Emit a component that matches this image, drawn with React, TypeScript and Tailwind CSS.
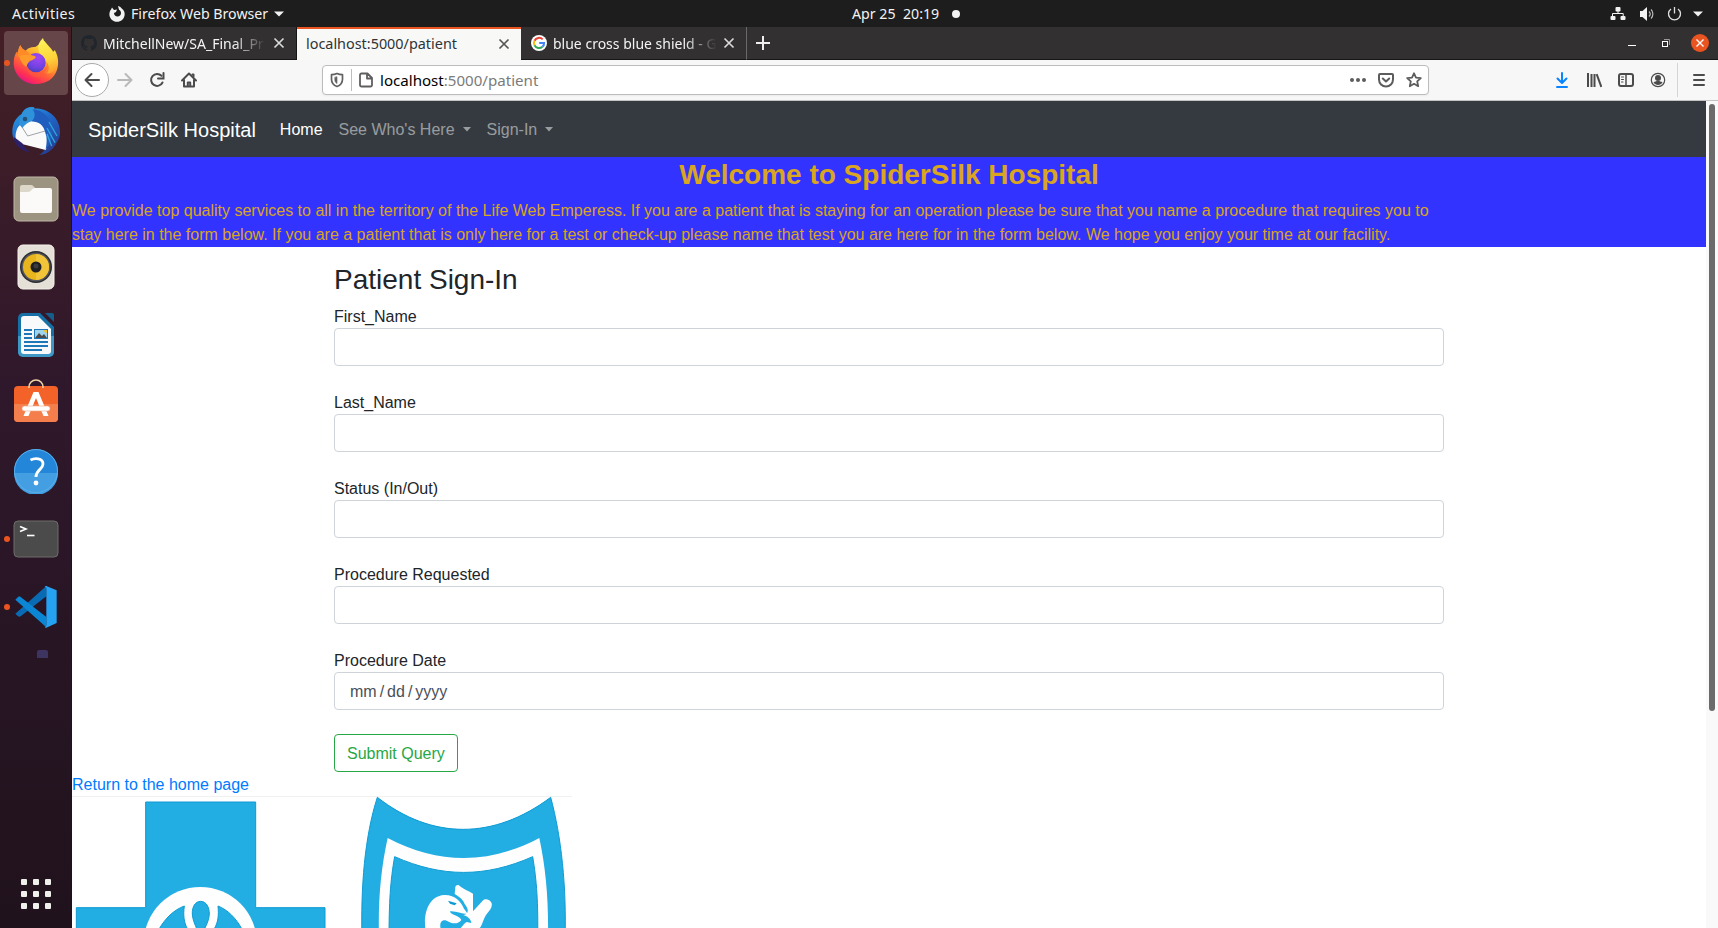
import React from "react";

function FirefoxLogo() {
  return (
    <svg width="48" height="50" viewBox="0 0 144 150">
      <defs>
        <linearGradient id="ffBody" x1="0.85" y1="0.05" x2="0.3" y2="1">
          <stop offset="0" stopColor="#fff24a" />
          <stop offset="0.35" stopColor="#ffb52c" />
          <stop offset="0.62" stopColor="#ff6a35" />
          <stop offset="0.85" stopColor="#ff2f55" />
          <stop offset="1" stopColor="#e31587" />
        </linearGradient>
        <linearGradient id="ffTail" x1="0.4" y1="0" x2="0.6" y2="1">
          <stop offset="0" stopColor="#fff45a" />
          <stop offset="0.6" stopColor="#ffd43a" />
          <stop offset="1" stopColor="#ff9a2d" />
        </linearGradient>
        <radialGradient id="ffGlobe" cx="0.6" cy="0.25" r="0.8">
          <stop offset="0" stopColor="#a347f0" />
          <stop offset="0.6" stopColor="#7542e5" />
          <stop offset="1" stopColor="#4a3fb8" />
        </radialGradient>
      </defs>
      <path d="M25 28 C28 36 34 42 41 44 C48 36 58 32 70 33 L96 14 C104 24 118 36 124 48 L128 42 C138 58 141 78 136 98 C128 128 102 144 72 144 C36 144 5 118 5 80 C5 64 10 52 16 46 L18 55 C18 44 20 35 25 28Z" fill="url(#ffBody)" />
      <path d="M93 6 C96 22 116 34 123 52 L126 44 C136 58 138 78 132 96 C124 112 108 116 96 110 C108 100 106 78 94 66 C76 52 72 24 93 6Z" fill="url(#ffTail)" />
      <circle cx="72" cy="80" r="29" fill="url(#ffGlobe)" />
      <path d="M20 50 C32 54 38 50 48 54 C55 58 64 58 72 62 C70 68 62 72 55 74 C50 78 46 82 43 92 C34 88 22 72 20 50Z" fill="#ff9b2a" />
      <path d="M25 28 C28 36 34 42 41 44 C46 46 54 52 52 58 C40 54 26 58 18 62 C17 48 20 36 25 28Z" fill="#ff8a28" />
      <path d="M43 90 C52 110 74 116 92 104 C104 96 106 86 102 76 C118 94 110 120 84 124 C60 126 44 112 43 90Z" fill="#ff5a38" opacity="0.6" />
    </svg>
  );
}

function ThunderbirdLogo() {
  return (
    <svg width="50" height="50" viewBox="0 0 150 150">
      <defs>
        <linearGradient id="tb" x1="0.1" y1="0" x2="0.8" y2="1">
          <stop offset="0" stopColor="#2aa2e2" />
          <stop offset="0.45" stopColor="#2068ca" />
          <stop offset="1" stopColor="#273a8c" />
        </linearGradient>
      </defs>
      <path d="M4 78 C4 50 16 34 32 24 C38 8 54 0 70 4 L66 8 C112 4 146 36 147 76 C148 92 142 104 138 108 C130 126 112 146 84 147 C96 140 102 132 104 126 L20 112 C8 104 4 90 4 78Z" fill="url(#tb)" />
      <path d="M22 62 C14 74 10 94 18 110 L104 132 C112 116 114 98 106 74 C96 56 84 46 64 46 C48 46 34 50 22 62Z" fill="#fafafa" />
      <path d="M26 52 L50 90 L106 74" fill="none" stroke="#8d9096" strokeWidth="2.5" />
      <path d="M32 24 C42 4 62 2 72 6 C66 10 64 12 64 14 C74 22 72 36 64 44 C52 48 42 54 34 66 L24 54 C26 44 28 36 32 24Z" fill="#3192dc" />
      <path d="M66 10 C98 14 120 36 124 70 C126 98 116 120 104 130 C108 110 108 94 104 84 C98 56 84 48 62 46 C74 36 74 22 66 10Z" fill="#1f5dbe" />
      <path d="M114 48 L138 90 M108 66 L132 110 M108 84 L122 120" stroke="#2fa6dc" strokeWidth="4" />
      <circle cx="42" cy="39" r="7" fill="#24527a" />
      <path d="M8 92 C8 114 26 132 58 140 C44 128 38 118 34 112Z" fill="#2d2068" />
    </svg>
  );
}

function FilesLogo() {
  return (
    <svg width="46" height="46" viewBox="0 0 46 46">
      <rect x="1" y="1" width="44" height="44" rx="5" fill="#9c9381" stroke="#c0b9a8" />
      <path d="M7 11a2 2 0 0 1 2-2h9c2 0 3 2 4 3v6H7z" fill="#ddd7ca" />
      <path d="M7 16h8c3 0 4-4 7-4h15a2 2 0 0 1 2 2v21a2 2 0 0 1-2 2H9a2 2 0 0 1-2-2z" fill="#fbfaf8" />
    </svg>
  );
}

function RhythmboxLogo() {
  return (
    <svg width="38" height="46" viewBox="0 0 38 46">
      <rect x="1" y="1" width="36" height="44" rx="5" fill="#e4dfd7" stroke="#f5f2ec" />
      <circle cx="19" cy="23" r="16" fill="#2c2d31" />
      <circle cx="19" cy="23" r="14.5" fill="#55575d" />
      <circle cx="19" cy="23" r="13" fill="#e9b51c" />
      <path d="M19 10a13 13 0 0 1 0 26z" fill="#f2c43a" />
      <circle cx="19" cy="23" r="5.5" fill="#1f1f21" />
      <circle cx="19" cy="22" r="2.5" fill="#3c3c3f" />
    </svg>
  );
}

function WriterLogo() {
  return (
    <svg width="38" height="46" viewBox="0 0 38 46">
      <path d="M6 1h17l14 14v25a5 5 0 0 1-5 5H6a5 5 0 0 1-5-5V6a5 5 0 0 1 5-5z" fill="#1670a5" />
      <path d="M1 24h36v16a5 5 0 0 1-5 5H6a5 5 0 0 1-5-5z" fill="#3f97c6" />
      <path d="M28 1h7a2 2 0 0 1 2 2v7z" fill="#155d8a" />
      <path d="M7 4h14l13 13v22a3 3 0 0 1-3 3H7a3 3 0 0 1-3-3V7a3 3 0 0 1 3-3z" fill="#f8f9fa" />
      <path d="M7 18h8M7 22h8M7 26h8M7 30h24M7 34h24M7 38h18" stroke="#1e78b8" strokeWidth="2" />
      <rect x="17.5" y="17.5" width="13" height="9" fill="#9fd4ef" stroke="#1e78b8" />
      <path d="M18 26l4-5 3 3 2-2 3 4z" fill="#4a4a4a" />
      <path d="M27 18h3v3c-2 0-3-1-3-3z" fill="#f5c02c" />
    </svg>
  );
}

function SoftwareLogo() {
  return (
    <svg width="46" height="44" viewBox="0 0 46 44">
      <rect x="1" y="7" width="44" height="36" rx="4" fill="#f26229" />
      <path d="M1 25h44v14a4 4 0 0 1-4 4H5a4 4 0 0 1-4-4z" fill="#f47f4c" />
      <path d="M16 9V8a7 7 0 0 1 14 0v1" fill="none" stroke="#f2d3a2" strokeWidth="1.6" />
      <path d="M20.500 13h5l10 24h-5L23 19l-7.500 18h-5z" fill="#fff" />
      <rect x="9" y="27" width="28" height="5" rx="2.500" fill="#fff" stroke="#f0a684" strokeWidth="0.6" />
    </svg>
  );
}

function HelpLogo() {
  return (
    <svg width="46" height="46" viewBox="0 0 46 46">
      <circle cx="23" cy="23" r="22" fill="#2486d8" />
      <path d="M1 25a22 22 0 0 0 44 0z" fill="#439ee2" />
      <circle cx="23" cy="23" r="21.500" fill="none" stroke="#5aaeea" />
      <path d="M17.500 12c4-2 12.500-2.500 12.500 4 0 5.500-7 5.500-7 13" fill="none" stroke="#fff" strokeWidth="2.800" />
      <circle cx="23" cy="35" r="2.400" fill="#fff" />
    </svg>
  );
}

function TerminalLogo() {
  return (
    <svg width="46" height="38" viewBox="0 0 46 38">
      <rect x="1" y="1" width="44" height="36" rx="4" fill="#4b4b4b" stroke="#6c6c69" />
      <path d="M7 6.500l6 2.500-6 2.500" fill="none" stroke="#fff" strokeWidth="1.600" />
      <path d="M14 15.500h7.500" stroke="#fff" strokeWidth="1.600" />
    </svg>
  );
}

function CodeLogo() {
  return (
    <svg width="44" height="44" viewBox="0 0 132 132">
      <path d="M4 86l8 8c3 2 6 2 8 0L97 34V3z" fill="#0a6bb5" />
      <path d="M4 44l8-8c3-2 6-2 8 0l77 60v31z" fill="#0b86d4" />
      <path d="M97 3l31 13v98l-31 14c-3 1-4 0-5-3 3 0 5-1 5-6V12c0-5-2-6-5-6 1-3 3-4 5-3z" fill="#25a2f2" />
    </svg>
  );
}

function DockItem({ children, running, active }: { children: React.ReactNode; running?: boolean; active?: boolean }) {
  return (
    <li className="relative flex h-[68px] w-[72px] shrink-0 items-center justify-center">
      {active && <span className="absolute inset-x-1 inset-y-0.5 rounded bg-[#67464a]" />}
      {running && <span className="absolute left-1 top-[31px] size-1.5 rounded-full bg-[#e95420]" />}
      <span className="relative">{children}</span>
    </li>
  );
}

function Dock() {
  return (
    <aside className="flex w-[72px] shrink-0 flex-col justify-between border-r border-[#20101b] bg-linear-to-b from-[#441f25] via-[#2f182b] via-40% to-[#20121c] pt-0.5">
      <ul className="flex flex-col">
        <DockItem running active><div className="-mt-1"><FirefoxLogo /></div></DockItem>
        <DockItem><ThunderbirdLogo /></DockItem>
        <DockItem><FilesLogo /></DockItem>
        <DockItem><RhythmboxLogo /></DockItem>
        <DockItem><WriterLogo /></DockItem>
        <DockItem><div className="-mt-1"><SoftwareLogo /></div></DockItem>
        <DockItem><HelpLogo /></DockItem>
        <DockItem running><TerminalLogo /></DockItem>
        <DockItem running><CodeLogo /></DockItem>
        <li className="ml-[37px] mt-[9px] h-2 w-[11px] rounded-t-[2px] bg-[#3d3560]" />
      </ul>
      <div className="mb-[19px] ml-[21px] grid w-[30px] grid-cols-3 gap-1.5">
        {Array.from({ length: 9 }, (_, i) => (
          <span key={i} className="size-1.5 rounded-[1px] bg-[#efefec]" />
        ))}
      </div>
    </aside>
  );
}

function Caret({ className }: { className: string }) {
  return (
    <svg className={className} width="10" height="6" viewBox="0 0 10 6">
      <path d="M0 .5h10L5 5.500z" fill="currentColor" />
    </svg>
  );
}

function SystemBar() {
  return (
    <header className="grid h-[27px] shrink-0 grid-cols-[852px_1fr_auto] items-center bg-[#1d1d1d] text-[14.200px] leading-[26px] text-[#f2f2f2]">
      <div className="flex items-center pl-3">
        <span className="w-[97px] tracking-[0.400px]">Activities</span>
        <svg width="16" height="16" viewBox="0 0 16 16">
          <path d="M3 1.500l2 2.500 3-.5-1 2.500-2 1c0 2 1.500 3.500 3.500 3.500S12 9 12 7c0-1.500-.8-2.500-2-3.200L9 0c2 .5 3 1.500 4 2.800 2 1.500 3 4 2.600 6.400C15 13 12 15.800 8 15.800S.4 12.500.4 8.500c0-2 .6-3.800 1.600-5z" fill="#f2f2f2" />
        </svg>
        <span className="ml-[6px] w-[143px] whitespace-nowrap">Firefox Web Browser</span>
        <Caret className="" />
      </div>
      <div className="flex items-center whitespace-pre">
        <span className="w-[100px]">Apr 25  20:19</span>
        <span className="size-2 rounded-full bg-[#f2f2f2]" />
      </div>
      <div className="flex items-center pr-[15px]">
        <svg className="mr-[13px]" width="16" height="16" viewBox="0 0 16 16" fill="#f2f2f2">
          <rect x="5.500" y="1" width="5" height="4.500" rx="1" /><rect x="0.500" y="10" width="5" height="4" rx="1" /><rect x="10.500" y="10" width="5" height="4" rx="1" />
          <path d="M2.500 10V7.500h10.700V10M8 5v3" fill="none" stroke="#f2f2f2" />
        </svg>
        <svg width="16" height="16" viewBox="0 0 16 16">
          <path d="M1 5h2.500L8 1v14l-4.500-4H1z" fill="#f2f2f2" />
          <path d="M10 5.500c1.500 1.500 1.500 3.500 0 5M12 3.500c2.500 2.500 2.500 6.500 0 9" fill="none" stroke="#b9b9b9" strokeWidth="1.200" />
        </svg>
        <svg className="ml-3" width="15" height="16" viewBox="0 0 15 16">
          <path d="M4 3a6 6 0 1 0 7 0M7.500 1v6.500" fill="none" stroke="#e0e0e0" strokeWidth="1.300" />
        </svg>
        <Caret className="ml-[11px]" />
      </div>
    </header>
  );
}

function Close({ className }: { className: string }) {
  return (
    <svg className={className} width="12" height="12" viewBox="0 0 12 12">
      <path d="M1.500 1.500l9 9M10.500 1.500l-9 9" stroke="currentColor" strokeWidth="1.700" />
    </svg>
  );
}

function TabStrip() {
  return (
    <div className="flex h-[33px] shrink-0 bg-[#323031] text-[14px] text-[#f4f4f4]">
      <div className="flex w-[225px] items-center border-b border-r border-[#161616] pl-[9px]">
        <svg width="16" height="16" viewBox="0 0 16 16" fill="#20262c">
          <path fillRule="evenodd" d="M8 0C3.580 0 0 3.580 0 8c0 3.540 2.290 6.530 5.470 7.590.4.070.55-.17.55-.38V13.700c-2.010.37-2.530-.49-2.690-.94-.09-.23-.48-.94-.82-1.130-.28-.15-.68-.52-.01-.53.63-.01 1.080.58 1.230.82.72 1.210 1.870.87 2.330.66.07-.52.28-.87.51-1.070-1.780-.2-3.640-.89-3.640-3.950 0-.87.31-1.590.82-2.150-.08-.2-.36-1.020.08-2.120 0 0 .67-.21 2.200.82a7.600 7.600 0 0 1 4 0c1.530-1.040 2.200-.82 2.200-.82.44 1.100.16 1.920.08 2.120.51.56.82 1.270.82 2.150 0 3.070-1.870 3.750-3.650 3.950.29.25.54.73.54 1.480v2.200c0 .21.15.46.55.38A8 8 0 0 0 16 8c0-4.420-3.580-8-8-8z" />
        </svg>
        <span className="ml-1.5 w-[163px] overflow-hidden whitespace-nowrap mask-r-from-80% mask-r-to-100%">MitchellNew/SA_Final_Pr</span>
        <Close className="ml-[7px] text-[#d9d9d9]" />
      </div>
      <div className="flex w-[224px] items-center justify-between border-t-2 border-[#e95420] bg-[#f8f8f7] pb-0.5 pl-[9px] pr-[11px] text-[#2e3436]">
        <span className="text-[14.400px]">localhost:5000/patient</span>
        <Close className="text-[#555]" />
      </div>
      <div className="flex w-[226px] items-center border-b border-r border-b-[#161616] border-r-[#69696a] pl-[10px]">
        <svg width="16" height="16" viewBox="0 0 16 16">
          <circle cx="8" cy="8" r="8" fill="#fff" />
          <path d="M11.700 4.400A5.100 5.100 0 0 0 3.500 5.700" fill="none" stroke="#ea4335" strokeWidth="2" />
          <path d="M3.500 5.700a5 5 0 0 0 0 4.600" fill="none" stroke="#fbbc05" strokeWidth="2" />
          <path d="M3.500 10.300a5.100 5.100 0 0 0 7.900 1.500" fill="none" stroke="#34a853" strokeWidth="2" />
          <path d="M8.200 8h4.900a5 5 0 0 1-1.700 3.800" fill="none" stroke="#4285f4" strokeWidth="2" />
        </svg>
        <span className="ml-[6px] w-[164px] overflow-hidden whitespace-nowrap mask-r-from-80% mask-r-to-100%">blue cross blue shield - G</span>
        <Close className="ml-[6px] text-[#d9d9d9]" />
      </div>
      <div className="flex flex-1 items-center border-b border-[#161616] pl-[9px] pr-[9px]">
        <svg width="14" height="14" viewBox="0 0 14 14"><path d="M7 0v14M0 7h14" stroke="#eee" strokeWidth="2" /></svg>
        <svg className="ml-auto" width="8" height="9" viewBox="0 0 8 9"><path d="M0 6.500h8" stroke="#fff" /></svg>
        <svg className="ml-[26px]" width="8" height="8" viewBox="0 0 8 8" fill="none">
          <path d="M2 .5h5.500V6" stroke="#999" /><rect x=".5" y="2.500" width="5" height="5" stroke="#fff" />
        </svg>
        <svg className="ml-[21px]" width="18" height="18" viewBox="0 0 18 18">
          <circle cx="9" cy="9" r="9" fill="#e95420" /><path d="M5.500 5.500l7 7M12.500 5.500l-7 7" stroke="#fff" strokeWidth="1.400" />
        </svg>
      </div>
    </div>
  );
}

function Glyph({ children, className = "", color = "#4b4b4d" }: { children: React.ReactNode; className?: string; color?: string }) {
  return (
    <svg className={className} width="16" height="16" viewBox="0 0 16 16" fill="none" stroke={color} strokeWidth="2" strokeLinecap="round" strokeLinejoin="round">
      {children}
    </svg>
  );
}

function Toolbar() {
  return (
    <div className="flex h-[41px] shrink-0 items-center border-b border-[#c4c4c4] bg-[#f7f7f7] pl-[3px]">
      <span className="flex size-[34px] items-center justify-center rounded-full border border-[#aaa] bg-white">
        <Glyph><path d="M15 8H1.500M7.500 2L1.500 8l6 6" /></Glyph>
      </span>
      <Glyph className="ml-2" color="#b9b9b9"><path d="M1 8h13.500M8.500 2l6 6-6 6" /></Glyph>
      <Glyph className="ml-4"><path d="M13.500 10.500a6 6 0 1 1-1-6.700" /><path d="M14.500 1v5.500H9" strokeLinejoin="miter" /></Glyph>
      <Glyph className="ml-4"><path d="M1 8.500L8 1.500l7 7M3 8v6.500h10V8" /><path d="M11.500 2.500h1v2" /><path d="M6.800 14v-3.500h2.400V14" /></Glyph>
      <div className="ml-[125px] flex h-[30px] w-[1107px] items-center rounded border border-[#bcbcbc] bg-white text-[15.100px] shadow-xs">
        <Glyph className="ml-1.5" color="#616163"><path d="M8 1.500c2 1 3.500 1.200 5.500 1.200v4.500c0 3.500-2 6-5.500 7.300-3.500-1.300-5.500-3.800-5.500-7.300V2.700c2 0 3.500-.2 5.500-1.200z" strokeWidth="1.700" /><path d="M8 5v6.500C6.500 10.500 5.800 9.500 5.800 7.500v-2z" fill="#616163" strokeWidth=".6" /></Glyph>
        <span className="ml-1.5 h-[22px] w-px bg-[#bdbdbd]" />
        <Glyph className="ml-1.5" color="#5f5f61"><path d="M3.500 1.500h6l4.500 4.500v7a1.500 1.500 0 0 1-1.500 1.500h-9A1.500 1.500 0 0 1 2 13V3a1.500 1.500 0 0 1 1.500-1.500zM9 2v4.500h4.500" strokeWidth="1.800" /></Glyph>
        <span className="ml-[6px] text-[#7b7b7b]"><span className="text-black">localhost</span>:5000/patient</span>
        <Glyph className="ml-auto"><g fill="#5c5c5e" stroke="none"><circle cx="2" cy="8" r="2" /><circle cx="8" cy="8" r="2" /><circle cx="14" cy="8" r="2" /></g></Glyph>
        <Glyph className="ml-3" color="#5c5c5e"><path d="M2 2h12a1 1 0 0 1 1 1v4.500a7 7 0 0 1-14 0V3a1 1 0 0 1 1-1zM4.800 6.500L8 9.500l3.200-3" /></Glyph>
        <Glyph className="ml-3 mr-1.5" color="#5c5c5e"><path d="M8 1.300l2 4.400 4.800.5-3.600 3.200 1 4.800L8 11.800l-4.200 2.400 1-4.800L1.200 6.200 6 5.700z" strokeWidth="1.800" /></Glyph>
      </div>
      <Glyph className="ml-[125px]" color="#0a84ff"><path d="M8 1v9.500M3.500 6.500L8 11l4.500-4.500M3 15h10" /></Glyph>
      <Glyph className="ml-4"><path d="M2 2v12M5.500 3v11M8.500 3v11M11 3l4 11" strokeLinecap="square" /></Glyph>
      <Glyph className="ml-4"><rect x="1" y="2" width="14" height="12" rx="2" /><path d="M8 2v12" strokeWidth="1.500" /><path d="M3.500 5h2M3.500 7.500h2M3.500 10h1.500" strokeWidth="1" /></Glyph>
      <Glyph className="ml-4"><circle cx="8" cy="8" r="6.700" strokeWidth="1.200" /><circle cx="8" cy="6" r="3" fill="#4b4b4d" stroke="none" /><path d="M3.500 10.500c2.500-2 6.500-2 9 0-2 3.300-7 3.300-9 0z" fill="#4b4b4d" stroke="none" /></Glyph>
      <span className="ml-[11px] h-[34px] w-px bg-[#d5d5d5]" />
      <Glyph className="ml-[13px]"><path d="M3 3h10M3 8h10M3 13h10" /></Glyph>
    </div>
  );
}

function NavDropdown({ label }: { label: string }) {
  return (
    <a className="flex items-center px-2 text-white/50">
      {label}
      <svg className="-mt-0.5 ml-2" width="8" height="5" viewBox="0 0 8 5"><path d="M0 0h8L4 4.500z" fill="currentColor" /></svg>
    </a>
  );
}

function Field({ label, children }: { label: string; children?: React.ReactNode }) {
  return (
    <label className="mb-6 block">
      <span className="block h-6 pt-px">{label}</span>
      <span className="flex h-[38px] items-center rounded border border-[#ced4da] bg-white px-[15px] pt-0.5 text-[#495057]">{children}</span>
    </label>
  );
}

function InsuranceLogo() {
  return (
    <svg className="block" width="500" height="132" viewBox="0 168 1500 396">
      <path d="M0 169H1500" stroke="#efefef" strokeWidth="3" />
      <g fill="#22ade3" stroke="#0e9bd3" strokeWidth="3">
        <path d="M221 186H551V503H759V600H13V503H221z" />
        <path d="M916 172C1080 300 1265 300 1436 172C1468 290 1484 440 1479 600H870C866 440 878 290 916 172z" />
      </g>
      <g fill="#fefefe">
        <circle cx="385" cy="611" r="170" />
        <path d="M947 294C1100 374 1250 374 1402 294C1422 390 1430 480 1428 600H921C918 480 926 390 947 294z" />
      </g>
      <g fill="#22ade3" stroke="#0e9bd3" strokeWidth="3">
        <path d="M337 498C305 510 280 535 262 566H346C336 548 333 525 337 498z" />
        <path d="M438 498C468 510 492 535 509 566H427C438 548 441 525 438 498z" />
        <path d="M386 484C369 484 360 502 361 522C362 540 369 553 374 566H398C404 553 411 540 412 522C412 502 403 484 386 484z" />
        <path d="M968 350C1110 413 1240 413 1382 350C1394 420 1399 490 1397 600H951C951 490 955 420 968 350z" />
      </g>
      <path d="M1060 566C1054 520 1070 468 1116 465C1150 464 1166 484 1176 506C1182 514 1186 518 1186 522C1166 521 1150 512 1134 514C1134 524 1164 528 1168 540C1158 554 1140 552 1124 542C1108 536 1102 550 1106 566z" fill="#fefefe" />
      <path d="M1150 440C1154 433 1160 434 1166 440C1176 448 1190 452 1203 461V514L1232 482C1240 474 1254 478 1259 490C1262 502 1252 512 1246 520C1232 538 1234 552 1222 566H1164C1172 560 1176 548 1184 546L1198 549C1197 536 1184 528 1174 525C1192 522 1190 506 1178 492C1172 476 1158 468 1148 462z" fill="#fefefe" />
      <path d="M1128 482L1154 490L1148 496L1134 491z" fill="#0e9bd3" />
    </svg>
  );
}

function HospitalPage() {
  return (
    <main className="min-w-0 flex-1 overflow-hidden bg-white font-['Liberation_Sans',Arial,sans-serif] text-base text-[#212529]">
      <nav className="flex h-14 items-center bg-[#343a40] px-4 pt-0.5">
        <a className="mr-4 text-[20px] leading-[30px] text-white">SpiderSilk Hospital</a>
        <a className="px-2 text-white">Home</a>
        <NavDropdown label="See Who's Here" />
        <NavDropdown label="Sign-In" />
      </nav>
      <section className="bg-[#3333ff] text-[#daa520]">
        <h1 className="mb-[7px] pt-px text-center text-[28px] font-bold leading-[33.600px]">Welcome to SpiderSilk Hospital</h1>
        <p className="w-10/12">
          We provide top quality services to all in the territory of the Life Web Emperess. If you are a patient that is staying for an operation please be sure that you name a procedure that requires you to stay here in the form below. If you are a patient that is only here for a test or check-up please name that test you are here for in the form below. We hope you enjoy your time at our facility.
        </p>
      </section>
      <form className="mx-auto mt-4 w-[1110px]">
        <h2 className="mb-2 text-[28px] leading-[33.600px]">Patient Sign-In</h2>
        <Field label="First_Name" />
        <Field label="Last_Name" />
        <Field label="Status (In/Out)" />
        <Field label="Procedure Requested" />
        <Field label="Procedure Date">
          <span>mm</span><span className="mx-[3px]">/</span><span>dd</span><span className="mx-[3px]">/</span><span>yyyy</span>
        </Field>
        <button type="button" className="block h-[38px] rounded border border-[#28a745] px-3 pt-0.5 text-[#28a745]">Submit Query</button>
      </form>
      <a className="block h-6 pt-px text-[#007bff]">Return to the home page</a>
      <InsuranceLogo />
    </main>
  );
}

export default function App() {
  return (
    <div className="flex h-screen w-screen flex-col overflow-hidden bg-white font-['Noto_Sans',sans-serif]">
      <SystemBar />
      <div className="flex min-h-0 flex-1">
        <Dock />
        <div className="flex min-w-0 flex-1 flex-col">
          <TabStrip />
          <Toolbar />
          <div className="flex min-h-0 flex-1">
            <HospitalPage />
            <div className="flex w-3 shrink-0 justify-center bg-[#f9f9f9] pt-[3px]">
              <span className="h-[607px] w-1.5 rounded-full bg-[#6b6b6b]" />
            </div>
          </div>
        </div>
      </div>
    </div>
  );
}
